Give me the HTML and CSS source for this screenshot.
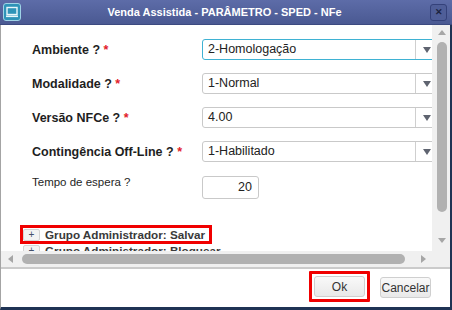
FILE: index.html
```html
<!DOCTYPE html>
<html lang="pt-BR">
<head>
  <meta charset="UTF-8">
  <title>Venda Assistida - PARÂMETRO - SPED - NFe</title>
  <link rel="stylesheet" href="styles.css">
</head>
<body>
  <div class="dialog">
    <div class="titlebar">
      <svg class="app-icon" width="18" height="18" viewBox="0 0 18 18">
        <rect x="0.5" y="0.5" width="17" height="17" rx="2.5" fill="#2f93b8" stroke="#9fd3e6"/>
        <rect x="4" y="4.5" width="10" height="7" fill="none" stroke="#e8f6fb" stroke-width="1.4"/>
        <rect x="3" y="12.5" width="12" height="1.6" fill="#e8f6fb"/>
      </svg>
      <span class="title">Venda Assistida - PARÂMETRO - SPED - NFe</span>
      <span class="close-btn">&#x2715;</span>
    </div>

    <div class="frame">
      <div class="view-row">
        <div class="content">
          <div class="form">
            <label class="lbl">Ambiente ? <span class="req">*</span></label>
            <div class="select focused"><span class="val">2-Homologação</span><span class="arrow"></span></div>

            <label class="lbl">Modalidade ? <span class="req">*</span></label>
            <div class="select"><span class="val">1-Normal</span><span class="arrow"></span></div>

            <label class="lbl">Versão NFCe ? <span class="req">*</span></label>
            <div class="select"><span class="val">4.00</span><span class="arrow"></span></div>

            <label class="lbl">Contingência Off-Line ? <span class="req">*</span></label>
            <div class="select"><span class="val">1-Habilitado</span><span class="arrow"></span></div>

            <label class="lbl light">Tempo de espera ?</label>
            <div class="num-input">20</div>
          </div>

          <div class="groups">
            <div class="group marked"><span class="plus">+</span><span class="group-name">Grupo Administrador: Salvar</span></div>
            <div class="group"><span class="plus">+</span><span class="group-name">Grupo Administrador: Bloquear</span></div>
          </div>
        </div>

        <div class="vscroll">
          <span class="tri up"></span>
          <div class="vthumb"></div>
          <span class="tri down"></span>
        </div>
      </div>

      <div class="hscroll-row">
        <div class="hscroll">
          <span class="tri left"></span>
          <div class="hthumb"></div>
          <span class="tri right"></span>
        </div>
        <div class="corner"></div>
      </div>
    </div>

    <div class="footer">
      <span class="mark-box"><button class="btn">Ok</button></span>
      <button class="btn">Cancelar</button>
    </div>
  </div>
</body>
</html>
```

FILE: styles.css
```css
body {
  margin: 0;
  padding: 0;
  background-color: #fff;
  font-family: "Liberation Sans", Arial, sans-serif;
  color: #222;
}

.dialog {
  width: 452px;
  height: 310px;
  display: flex;
  flex-direction: column;
  overflow: hidden;
}

/* title bar */
.titlebar {
  height: 25px;
  flex: none;
  display: flex;
  align-items: center;
  padding: 0 4px 0 3px;
  background: linear-gradient(#5d6ca8, #4a5992);
  border-bottom: 1px solid #3c4a80;
  box-sizing: border-box;
}

.app-icon {
  flex: none;
}

.title {
  flex: 1;
  text-align: center;
  color: #fff;
  font-weight: bold;
  font-size: 11px;
  padding-right: 2px;
}

.close-btn {
  width: 15px;
  height: 15px;
  border: 1px solid #34417a;
  border-radius: 3px;
  background-color: #4f5e98;
  color: #1c2340;
  font-size: 9px;
  font-weight: bold;
  display: flex;
  align-items: center;
  justify-content: center;
  margin-right: 1px;
}

/* frame */
.frame {
  flex: none;
  border-left: 1px solid #a4a4a4;
  border-right: 2px solid #1f3354;
  display: flex;
  flex-direction: column;
}

.view-row {
  height: 226px;
  display: flex;
}

.content {
  width: 431px;
  overflow: hidden;
  padding-top: 14px;
  box-sizing: border-box;
}

.form {
  display: grid;
  grid-template-columns: 170px 240px;
  row-gap: 13px;
  padding-left: 31px;
}

.lbl {
  font-size: 12.5px;
  font-weight: bold;
  color: #1e1e1e;
  align-self: center;
  white-space: nowrap;
}

.lbl.light {
  font-weight: normal;
  font-size: 11.5px;
  align-self: start;
  margin-top: 1px;
}

.req {
  color: #e2202a;
}

.select {
  height: 21px;
  width: 237px;
  display: flex;
  border: 1px solid #c9c9c9;
  border-radius: 3px 0 0 3px;
  box-sizing: border-box;
  font-size: 12.5px;
}

.select.focused {
  border-color: #3fb2d3;
}

.select .val {
  flex: 1;
  padding-left: 5px;
  line-height: 19px;
}

.select .arrow {
  width: 22px;
  border-left: 1px solid #cfcfcf;
  display: flex;
  align-items: center;
  justify-content: center;
}

.select .arrow::after {
  content: "";
  border-left: 4px solid transparent;
  border-right: 4px solid transparent;
  border-top: 6px solid #5f6470;
}

.num-input {
  width: 57px;
  height: 23px;
  margin-top: 1px;
  border: 1px solid #c9c9c9;
  border-radius: 3px;
  box-sizing: border-box;
  font-size: 12.5px;
  text-align: right;
  padding-right: 6px;
  line-height: 21px;
}

/* groups */
.groups {
  margin-top: 29px;
  padding-left: 22px;
  display: flex;
  flex-direction: column;
  gap: 3px;
}

.group {
  width: 186px;
  height: 13px;
  display: flex;
  align-items: center;
  gap: 5px;
  white-space: nowrap;
}

.group.marked {
  outline: 3px solid #f00000;
}

.plus {
  width: 17px;
  height: 12px;
  flex: none;
  border: 1px solid #d4d4d4;
  border-radius: 2px;
  background-color: #f3f3f3;
  box-sizing: border-box;
  font-size: 10px;
  line-height: 10px;
  text-align: center;
  color: #44506a;
}

.group-name {
  font-size: 11.7px;
  font-weight: bold;
  color: #3a3a3a;
}

/* scrollbars */
.vscroll {
  width: 18px;
  background-color: #f0f0f0;
  display: flex;
  flex-direction: column;
  align-items: center;
  padding: 5px 0 8px 1px;
  box-sizing: border-box;
}

.vthumb {
  width: 10px;
  height: 170px;
  margin: 7px 0 auto;
  background-color: #b1b1b1;
  border-radius: 5px;
}

.tri {
  display: block;
  width: 0;
  height: 0;
}

.tri.up {
  border-left: 4px solid transparent;
  border-right: 4px solid transparent;
  border-bottom: 5px solid #a6a6a6;
}

.tri.down {
  border-left: 4px solid transparent;
  border-right: 4px solid transparent;
  border-top: 5px solid #a6a6a6;
}

.tri.left {
  border-top: 4px solid transparent;
  border-bottom: 4px solid transparent;
  border-right: 5px solid #a6a6a6;
}

.tri.right {
  border-top: 4px solid transparent;
  border-bottom: 4px solid transparent;
  border-left: 5px solid #a6a6a6;
}

.hscroll-row {
  height: 16px;
  display: flex;
  border-bottom: 2px solid #cbcbcb;
}

.hscroll {
  width: 431px;
  display: flex;
  align-items: center;
  background-color: #f0f0f0;
  padding: 0 6px 0 7px;
  box-sizing: border-box;
}

.hthumb {
  width: 383px;
  height: 10px;
  margin: 0 auto 0 9px;
  background-color: #b1b1b1;
  border-radius: 5px;
}

.corner {
  flex: 1;
  background-color: #f0f0f0;
}

/* footer */
.footer {
  flex: 1;
  display: flex;
  justify-content: flex-end;
  align-items: flex-start;
  gap: 10px;
  padding: 2px 19px 0 0;
  border-left: 1px solid #a4a4a4;
  border-right: 2px solid #1f3354;
  border-bottom: 3px solid #1f3354;
}

.mark-box {
  display: flex;
  padding: 2px;
  border: 3px solid #f00000;
  border-radius: 1px;
}

.btn {
  width: 51px;
  height: 21px;
  padding: 0;
  border: 1px solid #cfcfcf;
  border-radius: 3px;
  background: linear-gradient(#f9f9f9, #e9e9e9);
  font-family: "Liberation Sans", Arial, sans-serif;
  font-size: 12px;
  color: #333;
}

.footer > .btn {
  margin-top: 6px;
}
```
